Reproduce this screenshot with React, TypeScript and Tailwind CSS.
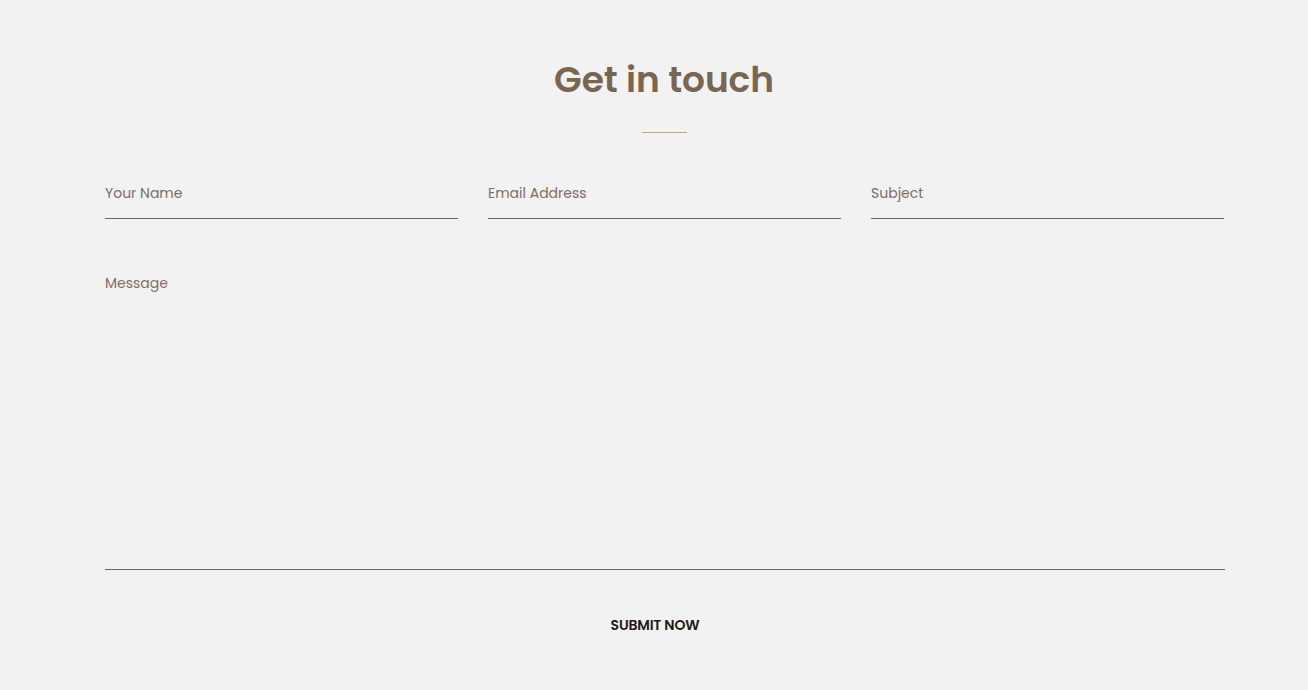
export default function App() {
  const font = { fontFamily: "Poppins, Inter, 'Open Sans', sans-serif" };
  return (
    <div className="min-h-[690px] w-full bg-[#f2f2f2]" style={font}>
      <div className="ml-[105px] w-[1120px] pt-[56px]">
        <h2 className="pr-[2px] text-center text-[36px] font-semibold leading-[48px] tracking-[-0.1px] text-[#7a6551]">
          Get in touch
        </h2>
        <div className="ml-[537px] mt-[28px] h-px w-[45px] bg-[#c6a675]" />
        <form className="mt-[44px]" onSubmit={(e) => e.preventDefault()}>
          <div className="grid w-[1119px] grid-cols-3 gap-[30px]">
            {["Your Name", "Email Address", "Subject"].map((p) => (
              <input
                key={p}
                placeholder={p}
                className="h-[42px] w-full border-b border-[#76675d] bg-transparent pb-[8px] text-[14px] text-[#7a6b62] placeholder:text-[#7e6d64] outline-none"
              />
            ))}
          </div>
          <textarea
            placeholder="Message"
            className="mt-[51px] block h-[300px] w-full resize-none border-b border-[#76675d] bg-transparent pt-[3px] text-[14px] text-[#7a6b62] placeholder:text-[#7e6d64] outline-none"
          />
          <div className="mt-[45px] flex justify-center pr-[20px]">
            <button className="text-[14px] font-semibold uppercase tracking-[-0.2px] text-[#1f1a17]">
              Submit Now
            </button>
          </div>
        </form>
      </div>
    </div>
  );
}
